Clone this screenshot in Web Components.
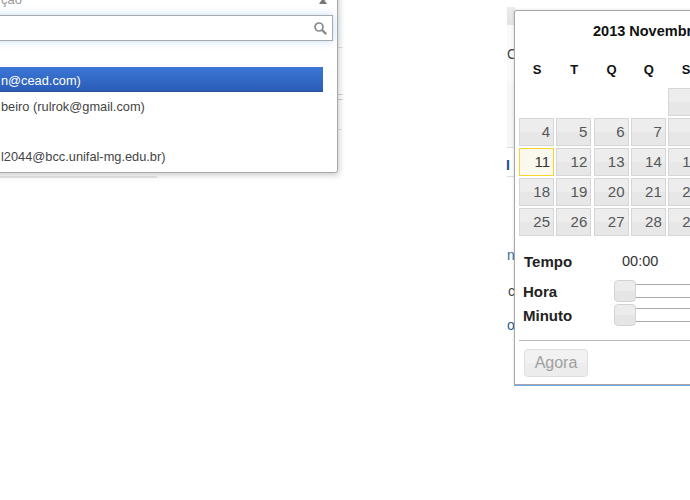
<!DOCTYPE html>
<html lang="pt">
<head>
<meta charset="utf-8">
<title>Calendario</title>
<style>
  html, body { margin: 0; height: 100%; background: #fff; overflow: hidden; }
  body { font-family: "Liberation Sans", Arial, sans-serif; }
</style>
</head>
<body>
<app-stage>
  <page-backdrop></page-backdrop>
  <user-picker label="ção">
    <user-row>n@cead.com)</user-row>
    <user-row indent="-1">beiro (rulrok@gmail.com)</user-row>
    <user-row></user-row>
    <user-row indent="-3">l2044@bcc.unifal-mg.edu.br)</user-row>
  </user-picker>
  <date-picker></date-picker>
</app-stage>
<script>
class AppStage extends HTMLElement {
  constructor() {
    super();
    this.attachShadow({ mode: "open" });
    this.shadowRoot.innerHTML = `
      <style>
        :host { display: block; position: relative; width: 690px; height: 500px; overflow: hidden; }
      </style>
      <slot></slot>
    `;
  }
}

// bits of the page that show around the two popups
class PageBackdrop extends HTMLElement {
  constructor() {
    super();
    this.attachShadow({ mode: "open" });
    this.shadowRoot.innerHTML = `
      <style>
        :host { display: block; position: absolute; inset: 0; color: #444; font-size: 14px; }
        .line { position: absolute; background: #e4e4e4; height: 1px; }
        .frag { position: absolute; left: 507px; width: 7px; overflow: hidden; white-space: nowrap; line-height: 16px; }
        .band { position: absolute; left: 507px; width: 8px; }
      </style>
      <div class="line" style="left:0;top:176px;width:157px;height:2px;background:#e8e8e8"></div>
      <div class="line" style="left:338px;top:47px;width:5px"></div>
      <div class="line" style="left:338px;top:94px;width:5px;background:#d4d4d4"></div>
      <div class="line" style="left:338px;top:99px;width:5px;background:#d4d4d4"></div>
      <div class="line" style="left:338px;top:129px;width:4px"></div>
      <div class="band" style="top:7px;height:18px;background:linear-gradient(#ececec,#e2e2e2)"></div>
      <div class="band" style="top:25px;height:60px;background:#fafafa"></div>
      <div class="band" style="top:83px;height:64px;background:#f6f6f6"></div>
      <div class="line" style="left:507px;top:147px;width:8px;background:#ddd"></div>
      <div class="line" style="left:507px;top:176px;width:8px;background:#ddd"></div>
      <div class="frag" style="top:46px">C</div>
      <div class="frag" style="top:157px;color:#1d4f91;left:506px;font-weight:bold">I</div>
      <div class="frag" style="top:247px;color:#2a6f9e">n</div>
      <div class="frag" style="top:283px;left:508px">c</div>
      <div class="frag" style="top:317px;color:#2a5f8e">o</div>
    `;
  }
}

class UserPicker extends HTMLElement {
  constructor() {
    super();
    this.attachShadow({ mode: "open" });
  }

  connectedCallback() {
    this.shadowRoot.innerHTML = `
      <style>
        :host {
          display: flex;
          flex-direction: column;
          position: absolute;
          left: -12px;
          top: -40px;
          width: 350px;
          height: 213px;
          box-sizing: border-box;
          background: #fff;
          border: 1px solid #a8a8a8;
          border-radius: 3px;
          box-shadow: 1px 2px 6px rgba(0, 0, 0, 0.22);
          padding-left: 12px;
          color: #444;
        }
        .head {
          display: flex;
          justify-content: space-between;
          align-items: flex-end;
          height: 46px;
          padding-right: 9px;
          font-size: 13px;
          line-height: 15px;
          color: #999;
        }
        .head svg { display: block; margin-bottom: 3px; }
        .search {
          display: flex;
          justify-content: flex-end;
          align-items: center;
          box-sizing: border-box;
          height: 26px;
          margin: 8px 4px 0 -14px;
          padding-right: 4px;
          border: 1px solid #a9a9a9;
          box-shadow: 0 0 8px rgba(120, 175, 235, 0.45);
          background: #fff;
        }
        .list { display: flex; flex-direction: column; margin: 26px 14px 0 0; }
      </style>
      <div class="head">
        <span>${this.getAttribute("label")}</span>
        <svg width="10" height="6" viewBox="0 0 10 6"><path d="M5 0 L9 6 H1 Z" fill="#777"/></svg>
      </div>
      <div class="search">
        <svg width="15" height="15" viewBox="0 0 15 15" fill="none" stroke="#8a8a8a">
          <circle cx="6" cy="6" r="4" stroke-width="1.7"/>
          <path d="M9 9 L13.2 13.2" stroke-width="2.4"/>
        </svg>
      </div>
      <div class="list"><slot></slot></div>
    `;
    const first = this.querySelector("user-row");
    if (first) first.setAttribute("selected", "");
  }
}

class UserRow extends HTMLElement {
  constructor() {
    super();
    this.attachShadow({ mode: "open" });
  }

  connectedCallback() {
    const indent = this.getAttribute("indent") || 0;
    this.shadowRoot.innerHTML = `
      <style>
        :host {
          display: block;
          height: 25px;
          line-height: 30px;
          font-size: 12.8px;
          white-space: nowrap;
          overflow: hidden;
          padding-left: ${indent}px;
        }
        :host([selected]) {
          color: #fff;
          line-height: 28px;
          background: linear-gradient(#3b76d6, #2a5cb6);
          box-shadow: inset 0 -1px 0 #2a5298;
          margin-left: -14px;
          padding-left: 14px;
        }
      </style>
      <slot></slot>
    `;
  }
}

class DayCell extends HTMLElement {
  constructor() {
    super();
    this.attachShadow({ mode: "open" });
    this.shadowRoot.innerHTML = `
      <style>
        :host {
          display: block;
          box-sizing: border-box;
          height: 28px;
          padding: 0 3px 0 0;
          text-align: right;
          font-size: 15px;
          line-height: 26px;
          color: #555;
          border: 1px solid #d6d6d6;
          background: linear-gradient(#ededed 50%, #e7e7e7 50%);
        }
        :host([today]) { border-color: #fad42e; background: #fbf9ee; color: #363636; }
      </style>
      <slot></slot>
    `;
  }
}

class TimeSlider extends HTMLElement {
  constructor() {
    super();
    this.attachShadow({ mode: "open" });
  }

  connectedCallback() {
    this.shadowRoot.innerHTML = `
      <style>
        :host {
          display: grid;
          grid-template-columns: 91px 1fr;
          align-items: center;
          height: 24px;
          font-weight: bold;
          font-size: 15px;
          color: #222;
        }
        .rail { position: relative; height: 12px; border: 1px solid #aaa; border-right: 0; background: #fff; }
        .thumb {
          position: absolute;
          left: -1px;
          top: -5px;
          box-sizing: border-box;
          width: 22px;
          height: 22px;
          border: 1px solid #d3d3d3;
          border-radius: 4px;
          background: linear-gradient(#ececec 50%, #e5e5e5 50%);
        }
      </style>
      <span>${this.getAttribute("label")}</span>
      <div class="rail"><div class="thumb"></div></div>
    `;
  }
}

class DatePicker extends HTMLElement {
  constructor() {
    super();
    this.attachShadow({ mode: "open" });
    this.render();
  }

  render() {
    const heads = ["S", "T", "Q", "Q", "S", "S", "D"]
      .map((d) => `<div class="dow">${d}</div>`)
      .join("");
    const cells = [];
    for (let i = 0; i < 4; i++) cells.push("<div></div>");
    for (let d = 1; d <= 29; d++) {
      cells.push(`<day-cell${d === 11 ? " today" : ""}>${d}</day-cell>`);
    }
    this.shadowRoot.innerHTML = `
      <style>
        :host {
          display: block;
          position: absolute;
          left: 514px;
          top: 10px;
          width: 300px;
          height: 375px;
          box-sizing: border-box;
          padding: 0 4px;
          background: #fff;
          border: 1px solid #a8a8a8;
          border-radius: 3px 3px 0 0;
          box-shadow: 0 1px 0 #6ea6e4, -1px -1px 2px rgba(0, 0, 0, 0.08);
        }
        .title {
          height: 40px;
          line-height: 40px;
          padding-left: 74px;
          font-weight: bold;
          font-size: 14.5px;
          color: #111;
          white-space: nowrap;
        }
        .dow-row, .days { display: grid; grid-template-columns: repeat(7, 35px); column-gap: 2.25px; }
        .dow-row { height: 37px; align-items: center; }
        .dow { text-align: center; font-weight: bold; font-size: 13px; line-height: 35px; height: 35px; padding-left: 1px; color: #111; }
        .days { grid-auto-rows: 28px; row-gap: 2px; }
        .time { display: grid; grid-template-columns: 98px 1fr; align-items: center; height: 24px; margin: 13px 0 5px 5px; font-size: 14.5px; color: #333; }
        .time b { font-size: 15px; color: #222; }
        .sliders { margin-left: 4px; padding-top: 1px; }
        hr { border: 0; border-top: 1px solid #bbb; margin: 13px 0 8px; }
        button {
          display: block;
          width: 64px;
          height: 28px;
          margin-left: 5px;
          padding: 0;
          font: 16px "Liberation Sans", Arial, sans-serif;
          color: #a0a0a0;
          border: 1px solid #dedede;
          border-radius: 4px;
          background: linear-gradient(#f2f2f2 50%, #ececec 50%);
        }
      </style>
      <div class="title">2013 Novembro</div>
      <div class="dow-row">${heads}</div>
      <div class="days">${cells.join("")}</div>
      <div class="time"><b>Tempo</b><span>00:00</span></div>
      <div class="sliders">
        <time-slider label="Hora"></time-slider>
        <time-slider label="Minuto"></time-slider>
      </div>
      <hr>
      <button type="button">Agora</button>
    `;
  }
}

customElements.define("app-stage", AppStage);
customElements.define("page-backdrop", PageBackdrop);
customElements.define("user-picker", UserPicker);
customElements.define("user-row", UserRow);
customElements.define("day-cell", DayCell);
customElements.define("time-slider", TimeSlider);
customElements.define("date-picker", DatePicker);
</script>
</body>
</html>
